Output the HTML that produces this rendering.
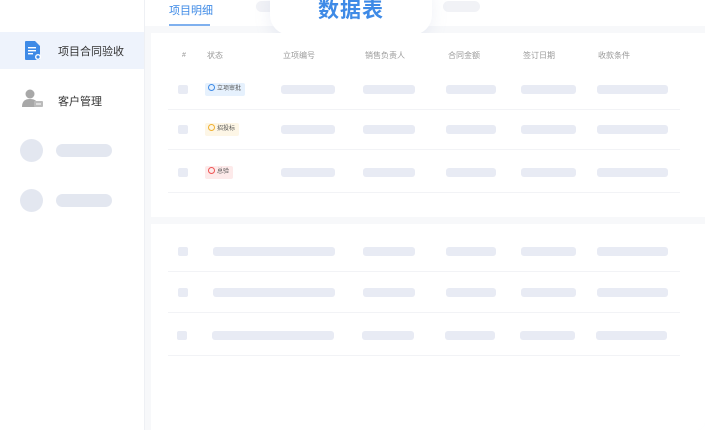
<!DOCTYPE html>
<html><head><meta charset="utf-8"><style>
*{margin:0;padding:0;box-sizing:border-box}
body{width:708px;height:430px;overflow:hidden;background:#fff;font-family:"Liberation Sans","Noto Sans CJK SC",sans-serif;position:relative}
.a{position:absolute}
.sk{position:absolute;background:#e8ebf4;border-radius:3px;height:9px}
.cb{position:absolute;background:#e8ebf4;border-radius:2px;width:10px;height:9px}
.ln{position:absolute;left:168px;width:512px;height:1px;background:#f2f3f6}
.h{position:absolute;top:50px;font-size:8px;color:#999}
.tag{position:absolute;height:13px;font-size:6px;line-height:13px;padding:0 4px 0 3px;border-radius:2px;color:#555;white-space:nowrap}
.tag i{display:inline-block;width:7px;height:7px;border:1px solid;border-radius:50%;vertical-align:-1px;margin-right:2px}
</style></head><body>
<!-- sidebar -->
<div class="a" style="left:0;top:0;width:145px;height:430px;background:#fff;border-right:1px solid #eef0f4"></div>
<div class="a" style="left:0;top:32px;width:144px;height:37px;background:#eef3fc"></div>
<svg class="a" style="left:24px;top:41px" width="18" height="20" viewBox="0 0 18 20"><path d="M2 0h9l5 5v13a1 1 0 0 1-1 1H2a1 1 0 0 1-1-1V1a1 1 0 0 1 1-1z" fill="#3e8ae6"/><rect x="4" y="6" width="8" height="1.4" fill="#fff"/><rect x="4" y="9" width="8" height="1.4" fill="#fff"/><rect x="4" y="12" width="5" height="1.4" fill="#fff"/><circle cx="14" cy="16" r="3" fill="#fff"/><circle cx="14" cy="16" r="1.6" fill="#3e8ae6"/></svg>
<div class="a" style="left:58px;top:43px;font-size:11px;color:#333">项目合同验收</div>
<svg class="a" style="left:22px;top:89px" width="22" height="20" viewBox="0 0 22 20"><circle cx="8" cy="5" r="4.5" fill="#a8a8a8"/><path d="M0 18c0-6 3-8 8-8s8 2 8 8z" fill="#a8a8a8"/><rect x="12" y="12" width="9" height="6" rx="1" fill="#bbb"/><rect x="14" y="14.5" width="5" height="1" fill="#fff"/></svg>
<div class="a" style="left:58px;top:93px;font-size:11px;color:#333">客户管理</div>
<div class="a" style="left:20px;top:139px;width:23px;height:23px;border-radius:50%;background:#e3e7f0"></div>
<div class="a" style="left:56px;top:144px;width:56px;height:13px;border-radius:7px;background:#e3e7f0"></div>
<div class="a" style="left:20px;top:189px;width:23px;height:23px;border-radius:50%;background:#e3e7f0"></div>
<div class="a" style="left:56px;top:194px;width:56px;height:13px;border-radius:7px;background:#e3e7f0"></div>
<!-- main bg -->
<div class="a" style="left:145px;top:0;width:560px;height:430px;background:#f7f8fa;border-bottom-right-radius:8px"></div>
<div class="a" style="left:145px;top:0;width:560px;height:26px;background:#fff"></div>
<div class="a" style="left:169px;top:2px;font-size:11px;color:#3e8ae6">项目明细</div>
<div class="a" style="left:169px;top:24px;width:41px;height:1.5px;background:#7fb0ee"></div>
<div class="a" style="left:256px;top:1px;width:40px;height:11px;border-radius:6px;background:#f1f2f6"></div>
<div class="a" style="left:443px;top:1px;width:37px;height:11px;border-radius:6px;background:#f1f2f6"></div>
<div class="a" style="left:270px;top:-20px;width:162px;height:55px;background:#fff;border-radius:20px;box-shadow:0 6px 16px rgba(150,160,200,.15)"></div>
<div class="a" style="left:270px;top:-6px;width:162px;text-align:center;font-size:21px;font-weight:bold;color:#3e8ae6;letter-spacing:1px">数据表</div>
<!-- panel1 -->
<div class="a" style="left:151px;top:33px;width:554px;height:184px;background:#fff"></div>
<div class="h" style="left:182px;top:52px;font-size:7px">#</div>
<div class="h" style="left:207px">状态</div>
<div class="h" style="left:283px">立项编号</div>
<div class="h" style="left:365px">销售负责人</div>
<div class="h" style="left:448px">合同金额</div>
<div class="h" style="left:523px">签订日期</div>
<div class="h" style="left:598px">收款条件</div>
<div class="cb" style="left:178px;top:85px"></div>
<div class="cb" style="left:178px;top:125px"></div>
<div class="cb" style="left:178px;top:168px"></div>
<div class="tag" style="left:205px;top:83px;background:#e6f1fd"><i style="border-color:#3e8ae6"></i>立项审批</div>
<div class="tag" style="left:205px;top:123px;background:#fdf6e6"><i style="border-color:#f0b030"></i>招投标</div>
<div class="tag" style="left:205px;top:166px;background:#fdeaea"><i style="border-color:#e55"></i>总验</div>
<div class="sk" style="left:281px;top:85px;width:54px"></div><div class="sk" style="left:363px;top:85px;width:52px"></div><div class="sk" style="left:446px;top:85px;width:50px"></div><div class="sk" style="left:521px;top:85px;width:55px"></div><div class="sk" style="left:597px;top:85px;width:71px"></div>
<div class="sk" style="left:281px;top:125px;width:54px"></div><div class="sk" style="left:363px;top:125px;width:52px"></div><div class="sk" style="left:446px;top:125px;width:50px"></div><div class="sk" style="left:521px;top:125px;width:55px"></div><div class="sk" style="left:597px;top:125px;width:71px"></div>
<div class="sk" style="left:281px;top:168px;width:54px"></div><div class="sk" style="left:363px;top:168px;width:52px"></div><div class="sk" style="left:446px;top:168px;width:50px"></div><div class="sk" style="left:521px;top:168px;width:55px"></div><div class="sk" style="left:597px;top:168px;width:71px"></div>
<div class="ln" style="top:109px"></div><div class="ln" style="top:149px"></div><div class="ln" style="top:192px"></div>
<!-- panel2 -->
<div class="a" style="left:151px;top:224px;width:554px;height:206px;background:#fff;border-bottom-right-radius:8px"></div>
<div class="cb" style="left:178px;top:247px"></div><div class="sk" style="left:213px;top:247px;width:122px"></div><div class="sk" style="left:363px;top:247px;width:52px"></div><div class="sk" style="left:446px;top:247px;width:50px"></div><div class="sk" style="left:521px;top:247px;width:55px"></div><div class="sk" style="left:597px;top:247px;width:71px"></div>
<div class="cb" style="left:178px;top:288px"></div><div class="sk" style="left:213px;top:288px;width:122px"></div><div class="sk" style="left:363px;top:288px;width:52px"></div><div class="sk" style="left:446px;top:288px;width:50px"></div><div class="sk" style="left:521px;top:288px;width:55px"></div><div class="sk" style="left:597px;top:288px;width:71px"></div>
<div class="cb" style="left:177px;top:331px"></div><div class="sk" style="left:212px;top:331px;width:122px"></div><div class="sk" style="left:362px;top:331px;width:52px"></div><div class="sk" style="left:445px;top:331px;width:50px"></div><div class="sk" style="left:520px;top:331px;width:55px"></div><div class="sk" style="left:596px;top:331px;width:71px"></div>
<div class="ln" style="top:271px"></div><div class="ln" style="top:312px"></div><div class="ln" style="top:355px"></div>
</body></html>
